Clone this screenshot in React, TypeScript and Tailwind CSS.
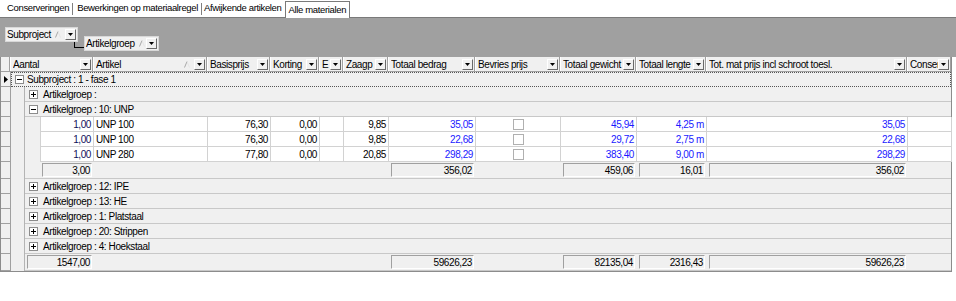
import React from "react";

const font = "font-['Liberation_Sans',Arial,sans-serif] text-[10px] tracking-[-0.4px] whitespace-nowrap";

// data columns, starting at the Aantal cell of a detail row (x = 39)
const cols = [
  "w-[54px]",
  "w-[114px]",
  "w-[63px]",
  "w-[49px]",
  "w-[24px]",
  "w-[45px]",
  "w-[87px]",
  "w-[85px]",
  "w-[76px]",
  "w-[70px]",
  "w-[201px]",
  "w-[44px]",
];

const headers = [
  { label: "Aantal", w: "w-[83px]" },
  { label: "Artikel", w: "w-[114px]", sort: true },
  { label: "Basisprijs", w: "w-[63px]" },
  { label: "Korting", w: "w-[49px]" },
  { label: "E", w: "w-[24px]" },
  { label: "Zaagp", w: "w-[45px]" },
  { label: "Totaal bedrag", w: "w-[87px]" },
  { label: "Bevries prijs", w: "w-[85px]" },
  { label: "Totaal gewicht", w: "w-[76px]" },
  { label: "Totaal lengte", w: "w-[70px]" },
  { label: "Tot. mat prijs incl schroot toesl.", w: "w-[201px]" },
  { label: "Conser", w: "w-[44px]" },
];

type Line = {
  aantal: string;
  artikel: string;
  basis: string;
  korting: string;
  zaag: string;
  bedrag: string;
  gewicht: string;
  lengte: string;
  mat: string;
};

const lines: Line[] = [
  { aantal: "1,00", artikel: "UNP 100", basis: "76,30", korting: "0,00", zaag: "9,85", bedrag: "35,05", gewicht: "45,94", lengte: "4,25 m", mat: "35,05" },
  { aantal: "1,00", artikel: "UNP 100", basis: "76,30", korting: "0,00", zaag: "9,85", bedrag: "22,68", gewicht: "29,72", lengte: "2,75 m", mat: "22,68" },
  { aantal: "1,00", artikel: "UNP 280", basis: "77,80", korting: "0,00", zaag: "20,85", bedrag: "298,29", gewicht: "383,40", lengte: "9,00 m", mat: "298,29" },
];

const closedGroups = ["12: IPE", "13: HE", "1: Platstaal", "20: Strippen", "4: Hoekstaal"];

function DropBtn() {
  return (
    <span className="flex h-[11px] w-[11px] shrink-0 items-center justify-center border border-t-white border-l-white border-r-[#696969] border-b-[#696969] bg-[#f0f0f0]">
      <svg width="5" height="3" viewBox="0 0 5 3">
        <path d="M0 0h5L2.5 3z" fill="#000" />
      </svg>
    </span>
  );
}

function SortGlyph() {
  return (
    <svg width="6" height="7" viewBox="0 0 6 7" className="shrink-0">
      <path d="M0.5 6.5L3 0.5" stroke="#a8a8a8" fill="none" />
      <path d="M3 0.5L5.5 6.5" stroke="#e4e4e4" fill="none" />
    </svg>
  );
}

function Expander({ open }: { open: boolean }) {
  return (
    <span className="flex h-[9px] w-[9px] shrink-0 items-center justify-center border border-[#8c8c8c] bg-white">
      <svg width="5" height="5" viewBox="0 0 5 5">
        <path d="M0 2.5h5" stroke="#000" />
        {!open && <path d="M2.5 0v5" stroke="#000" />}
      </svg>
    </span>
  );
}

function Indicator({ current, h }: { current?: boolean; h: string }) {
  return (
    <div className={`flex ${h} w-[10px] shrink-0 items-center justify-center border-b border-r border-[#a0a0a0] bg-[#f0f0f0]`}>
      {current && (
        <svg width="4" height="7" viewBox="0 0 4 7">
          <path d="M0 0l4 3.5L0 7z" fill="#000" />
        </svg>
      )}
    </div>
  );
}

function Indent() {
  return <div className="w-[14px] shrink-0 border-r border-[#b4b4b4] bg-[#f0f0f0]" />;
}

function GroupRow({ label, open }: { label: string; open: boolean }) {
  return (
    <div className="flex h-[15px]">
      <Indicator h="h-[15px]" />
      <Indent />
      <div className="flex flex-1 items-center gap-[5px] border-b border-[#c8c8c8] bg-[#f0f0f0] pl-[4px]">
        <Expander open={open} />
        <span>Artikelgroep : {label}</span>
      </div>
    </div>
  );
}

function DataRow({ l }: { l: Line }) {
  const cell = "flex h-full shrink-0 items-center border-b border-r border-[#d2d2d2] bg-white px-[2px]";
  return (
    <div className="flex h-[15px]">
      <Indicator h="h-[15px]" />
      <Indent />
      <div className="w-[15px] shrink-0 bg-[#f0f0f0]" />
      <div className={`${cell} ${cols[0]} justify-end border-l text-[#10105a]`}>{l.aantal}</div>
      <div className={`${cell} ${cols[1]}`}>{l.artikel}</div>
      <div className={`${cell} ${cols[2]} justify-end`}>{l.basis}</div>
      <div className={`${cell} ${cols[3]} justify-end`}>{l.korting}</div>
      <div className={`${cell} ${cols[4]}`} />
      <div className={`${cell} ${cols[5]} justify-end`}>{l.zaag}</div>
      <div className={`${cell} ${cols[6]} justify-end text-[#1a1aff]`}>{l.bedrag}</div>
      <div className={`${cell} ${cols[7]} justify-center`}>
        <span className="h-[11px] w-[11px] border border-[#b0b0b0] bg-white" />
      </div>
      <div className={`${cell} ${cols[8]} justify-end text-[#1a1aff]`}>{l.gewicht}</div>
      <div className={`${cell} ${cols[9]} justify-end text-[#1a1aff]`}>{l.lengte}</div>
      <div className={`${cell} ${cols[10]} justify-end text-[#1a1aff]`}>{l.mat}</div>
      <div className={`${cell} ${cols[11]}`} />
    </div>
  );
}

function SumBox({ w, value }: { w: string; value?: string }) {
  return (
    <div className={`flex h-full shrink-0 items-center px-[2px] py-[1px] ${w}`}>
      {value && (
        <div className="flex h-full w-full items-center justify-end border border-t-[#a0a0a0] border-l-[#a0a0a0] border-r-white border-b-white bg-[#f0f0f0] pr-[1px]">
          {value}
        </div>
      )}
    </div>
  );
}

function FooterRow({ totals, first, wide }: { totals: string[]; first: string; wide?: boolean }) {
  return (
    <div className="flex h-[17px]">
      <Indicator h="h-[17px]" />
      <Indent />
      <div className="flex flex-1 border-b border-[#c8c8c8] bg-[#f0f0f0]">
        {wide ? (
          <SumBox w="w-[69px]" value={first} />
        ) : (
          <>
            <div className="w-[15px] shrink-0" />
            <SumBox w={cols[0]} value={first} />
          </>
        )}
        <SumBox w="w-[295px]" />
        <SumBox w={cols[6]} value={totals[0]} />
        <SumBox w={cols[7]} />
        <SumBox w={cols[8]} value={totals[1]} />
        <SumBox w={cols[9]} value={totals[2]} />
        <SumBox w={cols[10]} value={totals[3]} />
      </div>
    </div>
  );
}

function GroupBox({ label, w }: { label: string; w: string }) {
  return (
    <div className={`flex h-[15px] items-center border border-[#d8d8d8] bg-[#f0f0f0] pl-[1px] ${w}`}>
      <span>{label}</span>
      <span className="ml-[4px]">
        <SortGlyph />
      </span>
      <span className="ml-auto mr-[1px]">
        <DropBtn />
      </span>
    </div>
  );
}

export default function App() {
  return (
    <div className={`h-[301px] w-[956px] overflow-hidden bg-white text-black ${font}`}>
      {/* tabs */}
      <div className="flex h-[18px] items-end border-b border-[#7a7a7a] pl-[3px] text-[9.5px] tracking-[-0.35px]">
        <div className="flex h-[17px] shrink-0 items-center">
          <span className="pl-[4px] pr-[3px]">Conserveringen</span>
          <span className="h-[12px] border-l border-[#808080]" />
          <span className="pl-[4px] pr-[3px]">Bewerkingen op materiaalregel</span>
          <span className="h-[12px] border-l border-[#808080]" />
          <span className="pl-[2px] pr-[3px]">Afwijkende artikelen</span>
        </div>
        <div className="-mb-px flex h-[17px] shrink-0 items-center border-x border-t border-[#7a7a7a] bg-white px-[3px]">
          Alle materialen
        </div>
      </div>

      {/* group by panel */}
      <div className="flex h-[39px] items-start bg-[#a0a0a0] pl-[5px]">
        <div className="mt-[9px]">
          <GroupBox label="Subproject" w="w-[73px]" />
        </div>
        <div className="-ml-[4px] mt-[24px] h-[6px] w-[10px] border-b border-l border-black" />
        <div className="mt-[18px]">
          <GroupBox label="Artikelgroep" w="w-[75px]" />
        </div>
      </div>

      {/* grid */}
      <div className="w-[952px] border-b border-l border-r border-[#8c8c8c]">
        <div className="flex h-[15px] border-b border-[#a0a0a0] bg-[#f0f0f0]">
          <div className="w-[9px] shrink-0 border-r border-[#a0a0a0]" />
          {headers.map((h) => (
            <div
              key={h.label}
              className={`flex h-full shrink-0 items-center overflow-hidden border-l border-r border-l-white border-r-[#a0a0a0] pl-[2px] pr-[1px] ${h.w}`}
            >
              <span className="min-w-0 flex-1 overflow-hidden">{h.label}</span>
              {h.sort && (
                <span className="mr-[4px]">
                  <SortGlyph />
                </span>
              )}
              <DropBtn />
            </div>
          ))}
        </div>

        <div className="flex h-[15px]">
          <Indicator h="h-[15px]" current />
          <div className="flex flex-1 items-center gap-[3px] border border-dotted border-[#555] bg-[#f0f0f0] pl-[3px]">
            <Expander open />
            <span>Subproject : 1 - fase 1</span>
          </div>
        </div>

        <GroupRow label="" open={false} />
        <GroupRow label="10: UNP" open />
        {lines.map((l, i) => (
          <DataRow key={i} l={l} />
        ))}
        <FooterRow first="3,00" totals={["356,02", "459,06", "16,01", "356,02"]} />
        {closedGroups.map((g) => (
          <GroupRow key={g} label={g} open={false} />
        ))}
        <FooterRow wide first="1547,00" totals={["59626,23", "82135,04", "2316,43", "59626,23"]} />
      </div>
    </div>
  );
}
